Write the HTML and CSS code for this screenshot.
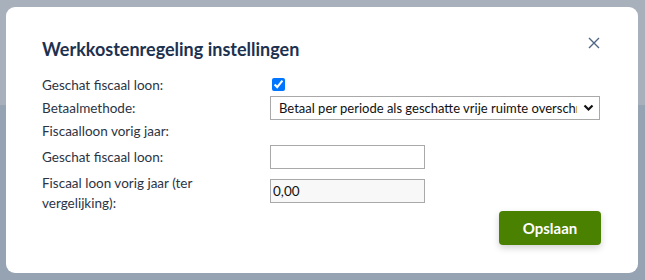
FILE: index.html
```html
<!DOCTYPE html>
<html>
<head>
    <title>Werkkostenregeling instellingen</title>
    <link rel="stylesheet" href="styles.css">
</head>
<body>
    <div class="modal">
        <div class="modal-header">
            <h2 class="modal-title">Werkkostenregeling instellingen</h2>
            <button class="close-btn" aria-label="Sluiten">
                <svg width="12" height="12" viewBox="0 0 12 12"><path d="M1 1 L11 11 M11 1 L1 11" stroke="#4f6684" stroke-width="1.4" fill="none"/></svg>
            </button>
        </div>

        <div class="form-grid">
            <label class="form-label" for="geschat">Geschat fiscaal loon:</label>
            <div class="form-control"><input type="checkbox" id="geschat" checked></div>

            <label class="form-label" for="betaal">Betaalmethode:</label>
            <div class="form-control select-wrap">
                <select id="betaal" class="select">
                    <option>Betaal per periode als geschatte vrije ruimte overschreden wordt</option>
                </select>
                <svg class="chevron" width="11" height="8" viewBox="0 0 11 8"><path d="M1.5 1.5 L5.5 5.5 L9.5 1.5" stroke="#111" stroke-width="2.2" fill="none"/></svg>
            </div>

            <div class="form-label full">Fiscaalloon vorig jaar:</div>

            <label class="form-label" for="geschat-loon">Geschat fiscaal loon:</label>
            <div class="form-control"><input type="text" id="geschat-loon" class="text-input"></div>

            <label class="form-label two-line" for="vorig">Fiscaal loon vorig jaar (ter vergelijking):</label>
            <div class="form-control"><input type="text" id="vorig" class="text-input readonly" value="0,00" readonly></div>
        </div>

        <div class="modal-footer">
            <button class="save-btn">Opslaan</button>
        </div>
    </div>
</body>
</html>
```

FILE: styles.css
```css
html, body {
    margin: 0;
    height: 100%;
}

body {
    background: linear-gradient(#a8b1bb 0, #a8b1bb 105px, #95a3b2 105px);
    font-family: "Lato", "Noto Sans", sans-serif;
    font-size: 13.5px;
    color: #2c3444;
    padding: 7px 7px 0 6px;
    box-sizing: border-box;
}

.modal {
    background: #fff;
    border-radius: 9px;
    height: 266px;
    padding: 28px 37px 0 36px;
    box-sizing: border-box;
}

.modal-header {
    display: flex;
    justify-content: space-between;
    align-items: flex-start;
}

.modal-title {
    margin: 3px 0 0;
    font-size: 18px;
    font-weight: 700;
    color: #1d3150;
}

.close-btn {
    background: none;
    border: none;
    padding: 0;
    margin: 2px 1px 0 0;
    width: 12px;
    height: 12px;
    display: flex;
}

.form-grid {
    display: grid;
    grid-template-columns: 228px 330px;
    align-items: center;
    margin-top: 15px;
}

.form-label {
    line-height: 20px;
}

.form-label.full {
    grid-column: 1 / 3;
    margin-bottom: 4px;
}

.form-label.two-line {
    width: 172px;
    margin-top: 4px;
}

.form-control input[type="checkbox"] {
    margin: 2px 0 0 2px;
    width: 13px;
    height: 13px;
}

.select-wrap {
    position: relative;
    height: 24px;
    margin: 1px 0;
}

.select {
    appearance: none;
    width: 330px;
    height: 24px;
    border: 1px solid #a9a9a9;
    border-radius: 0;
    background: #fff;
    font-family: inherit;
    font-size: 13px;
    color: #111;
    padding: 0 22px 0 8px;
    white-space: nowrap;
    overflow: hidden;
}

.chevron {
    position: absolute;
    right: 6px;
    top: 8px;
    pointer-events: none;
}

.text-input {
    width: 155px;
    height: 24px;
    box-sizing: border-box;
    border: 1px solid #a9a9a9;
    font-family: inherit;
    font-size: 13.5px;
    padding: 0 2px;
    color: #111;
}

.text-input.readonly {
    background: #f8f8f8;
}

.modal-footer {
    display: flex;
    justify-content: flex-end;
    margin-top: -2px;
}

.save-btn {
    width: 102px;
    height: 34px;
    background: #4a8100;
    color: #fff;
    border: none;
    border-radius: 4px;
    font-family: inherit;
    font-size: 15px;
    font-weight: 700;
    box-shadow: 0 3px 7px rgba(0, 0, 0, 0.18);
}
```
